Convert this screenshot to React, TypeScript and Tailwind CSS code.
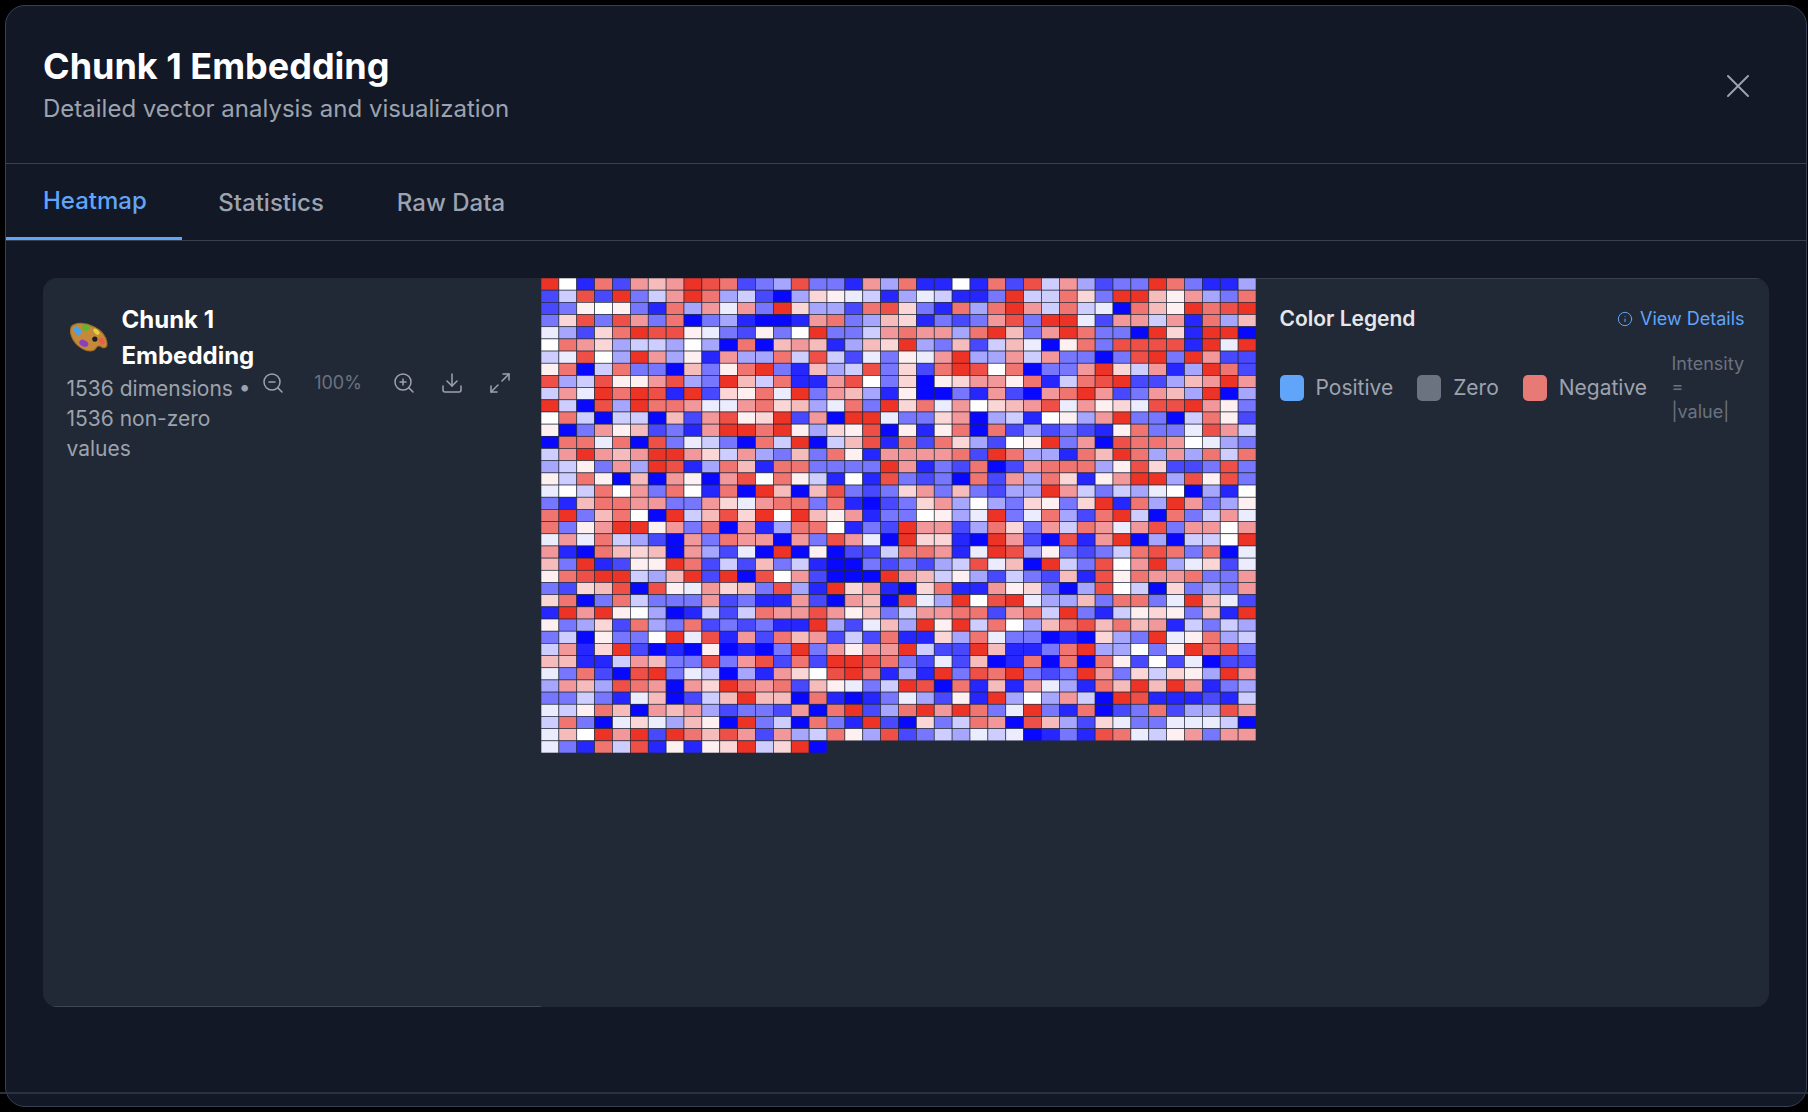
import React from "react";
import { Download, Info, Maximize2, X, ZoomIn, ZoomOut } from "lucide-react";

// one letter per cell: A-G blue (strong to pale), a-g red (strong to pale), W white
const HEATMAP_ROWS = [
  "aWBcCdedabcCDEbDDBdEcBBWBcCbFdECDDacDBBE",
  "CFbCaDFdacEFCAEfgGFBEGFBBDaFFcfDaaegdEDc",
  "CDgWgDBcEdGdDafEECcbfDBcEcadFcFGAcegacba",
  "DfbDbdDcADEBAABdcDEefBDCDdbDaaGCddFdBcEe",
  "GECfcabbgGDCgDWaDDFdcddEcaeDdacDDAafBaaA",
  "WcdfEFFEWEAcAedeBEefaEDeCFeGAgcDbbbbBaGa",
  "FGbWEadEgBdEEcFbFCGDgGdaEEdFdDDADbaDadCC",
  "gcAFcDDAeDgcaDBeEFbDfCcabWcADDdafFdBEacC",
  "bEFbggdbEDaeFcBBdbWDfAgfddgcBFcbaCCEedad",
  "FdGacabBaCfgcGaDdeEBgAADBdCAdcadCDdeEaAE",
  "aFAbEaccdGGdcfeEGcDafcGdWfedbGdgfGbbadgD",
  "WcFAFFAeCdbgfaCdAaaGDDfdAEFBWgEdaDDAFcgC",
  "gADdgeCDBdaacagEfgbAgBgcAcCECDCBgcDDGbdF",
  "AccGcAbDGFDAcFaAFebBcCcfECWgaDdAbccdWGED",
  "FdadedaadfFdEDeDcgBddddcCacEEBceacEdEcFc",
  "EFgDdEabBEceBccDDDDadBDCcACdcccEgbfCCDbD",
  "gFcgAeAdgAdbWcgFBWBbDCDAcCdEcfBgdaaEbgbD",
  "GWFcWdDcWBcAaeAebDCDfdDeDCEEadFDFEGWAEBW",
  "DBeccddDDdfGdccDcBACDfdEWEDfgDfaBcEadDEg",
  "caDecWAaFebfaWaegdBDDWgEGaDGcECcaFAcDFdG",
  "cDgdaagdDcAdBEccWBDCaddCEcfDdFcdGdbDddWd",
  "GdGcFECAdDcddAdDbdGAaffBAadCAbBdaAEAFFWa",
  "dBAcefeAdECGAaAgACCFccdBGabEgDCDFcbcDcAG",
  "eDaBCggacCFCeDFBAADCDCEFbGeAaFDbWdaEGfCG",
  "gcbaaFEeaCaAbWdCAAAadeFgECFDCeBbgcddcDDd",
  "DCfebAbgGdfeDbEBafdBAfcBBdgfDAEbWFAfDEDd",
  "fcADcFDDDdCDBBdCAdeAbGEaWbaGEEeDccDGaeGC",
  "BadagWEABFCFcddbdgeDFddccCdcFaDBFgfgDeBa",
  "gDEfCcEDcCDCDBBaECGeEagaFcWEecbecedBFDFE",
  "DFAgDDWaGbBdCcedCFCcBBfEcGDDABAfEDaGgcEF",
  "FdBfaCABAgABADaDdgddaFCCaeBBDcaEEWDgacbD",
  "eeBBFdeDDbDdbCcCaabcDCGCeABcAcAcgCWCGACC",
  "GDcCAbaDGFAEBdfWbacBEBaDbcaDCDadDfFfgEad",
  "EdeEbcdAdfacdcCegGDFabAcBeBdGEBceaeadBDE",
  "DDFDBGeACFeaeeAcBABDGECgBaEWEdFAabBBBCBF",
  "GFgceAdedECDDCdAcaCEcadacDGaDBcACDcCEEbd",
  "FcDAGfGEegAaDFAcDBaCAfDFcdAbeECfGDDGGGFA",
  "GeWadaCacebdCdEFcgEbCDFEGFGABDBbcGFgdDdd",
  "GDBcFbBgBgfaFfaA",
];

const CELL_COLORS: Record<string, string> = {
  A: "#0808ff",
  B: "#2626ff",
  C: "#4848ff",
  D: "#7676ff",
  E: "#a6a6ff",
  F: "#cdcdff",
  G: "#ececff",
  W: "#ffffff",
  a: "#ed3326",
  b: "#ee5048",
  c: "#f07470",
  d: "#f3989a",
  e: "#f6bcbc",
  f: "#fad6d6",
  g: "#fef0f0",
};

const CELL_W = 715 / 40;
const CELL_H = 475 / 39;

const Heatmap = () => (
  <svg viewBox="0 0 715 475" className="h-[475px] w-[715px] shrink-0">
    {HEATMAP_ROWS.map((row, r) =>
      row
        .split("")
        .map((c, i) => (
          <rect
            key={`${r}-${i}`}
            x={i * CELL_W}
            y={r * CELL_H}
            width={CELL_W}
            height={CELL_H}
            fill={CELL_COLORS[c]}
            stroke="#222936"
            strokeOpacity={0.85}
            strokeWidth={0.7}
          />
        )),
    )}
  </svg>
);

const PaletteIcon = () => (
  <svg viewBox="0 0 38 30" className="h-8 w-10 shrink-0">
    <path
      d="M3 4.5C7-.5 17 .5 25 4.5c6 3 11 8 12 15 .6 4-2 6-5 4-2-1.400-4-1.600-5.500 1-2 4-8 3.500-13 .5C6 21 .5 12 3 4.500z"
      fill="#c48a3a"
      stroke="#a06f28"
      strokeWidth="1"
    />
    <ellipse cx="9" cy="8" rx="3" ry="4.500" transform="rotate(-35 9 8)" fill="#4aa3e8" />
    <ellipse cx="17" cy="5" rx="3.500" ry="3" fill="#5cb82e" />
    <ellipse cx="27" cy="9" rx="2" ry="3.500" transform="rotate(-45 27 9)" fill="#e8cf3a" />
    <ellipse cx="15" cy="20" rx="4.500" ry="3" transform="rotate(25 15 20)" fill="#8a3fc0" />
    <ellipse cx="32" cy="18" rx="2.500" ry="3.500" transform="rotate(-30 32 18)" fill="#e8604c" />
    <circle cx="25.500" cy="16" r="2.500" fill="#1c1c22" />
  </svg>
);

const LegendItem = ({ color, label }: { color: string; label: string }) => (
  <div className="flex items-center gap-3">
    <span className={`h-[26px] w-6 rounded-[5px] ${color}`} />
    <span className="text-[21px] leading-[30px] text-[#9ca3af]">{label}</span>
  </div>
);

export default function App() {
  return (
    <div className="relative h-[1112px] w-[1808px] overflow-hidden bg-black pl-[5px] pr-[1.5px] pt-[5px] [font-family:Inter,'Noto_Sans',sans-serif]">
      <div className="h-[1102px] rounded-[20px] border-[1.5px] border-[#374151] bg-[#121826]">
        {/* Header */}
        <div className="flex h-[158px] items-center justify-between border-b-[1.5px] border-[#374151] pl-[37px] pr-[48px]">
          <div>
            <h2 className="text-[36px] font-bold leading-[48px] text-white">Chunk 1 Embedding</h2>
            <p className="mt-[1px] text-[24px] leading-[36px] text-[#9ca3af]">
              Detailed vector analysis and visualization
            </p>
          </div>
          <X size={40} strokeWidth={1.2} className="mt-[3px] text-[#9ca3af]" />
        </div>

        {/* Tabs */}
        <div className="flex h-[77px] items-stretch border-b-[1.5px] border-[#374151]">
          <button className="border-b-[3.500px] border-[#60a5fa] pl-[37px] pr-[35px] text-[24px] font-medium text-[#60a5fa]">
            Heatmap
          </button>
          <button className="px-[36.500px] pt-[2px] text-[24px] font-medium text-[#9ca3af]">
            Statistics
          </button>
          <button className="px-[36.500px] pt-[2px] text-[24px] font-medium text-[#9ca3af]">
            Raw Data
          </button>
        </div>

        {/* Panel */}
        <div className="ml-[36.500px] mt-[36.500px] flex h-[729px] w-[1726px] overflow-hidden rounded-[14px] bg-[#222936]">
          <div className="flex h-full w-[498px] shrink-0 items-start justify-between border-b-[1.5px] border-[#3d4657] py-[24px] pl-[24px] pr-[29px]">
            <div className="flex h-[162px] w-full items-center justify-between">
              <div className="w-[188px] shrink-0">
                <div className="flex items-center gap-[14px]">
                  <span className="pl-[1px]">
                    <PaletteIcon />
                  </span>
                  <h3 className="text-[24px] font-bold leading-[36px] text-white">
                    Chunk 1 Embedding
                  </h3>
                </div>
                <p className="text-[21px] leading-[30px] text-[#9ca3af]">
                  1536 dimensions • 1536 non-zero values
                </p>
              </div>
              <div className="flex items-center text-[#9ca3af]">
                <ZoomOut size={24} strokeWidth={1.5} />
                <span className="w-[107px] text-center text-[18px] text-[#6b7280]">100%</span>
                <ZoomIn size={24} strokeWidth={1.5} />
                <Download size={24} strokeWidth={1.5} className="ml-[24px]" />
                <Maximize2 size={24} strokeWidth={1.5} className="ml-[24px]" />
              </div>
            </div>
          </div>

          <Heatmap />

          <div className="flex-1 border-t-[1.5px] border-[#374151] px-6 pt-[25px]">
            <div className="flex items-center justify-between">
              <h4 className="text-[21px] font-semibold leading-[30px] text-[#e5e7eb]">
                Color Legend
              </h4>
              <button className="flex items-center gap-[7px] text-[18px] text-[#60a5fa]">
                <Info size={16} strokeWidth={1.5} />
                View Details
              </button>
            </div>
            <div className="mt-[18px] flex items-center justify-between">
              <div className="flex items-center gap-6">
                <LegendItem color="bg-[#60a5fa]" label="Positive" />
                <LegendItem color="bg-[#6b7280]" label="Zero" />
                <LegendItem color="bg-[#e87a75]" label="Negative" />
              </div>
              <p className="w-[73px] text-[18px] leading-[24px] text-[#6b7280]">
                Intensity = |value|
              </p>
            </div>
          </div>
        </div>
      </div>
      <div className="absolute left-0 right-0 top-[1092px] h-[1.5px] bg-[#2a3140]" />
    </div>
  );
}
